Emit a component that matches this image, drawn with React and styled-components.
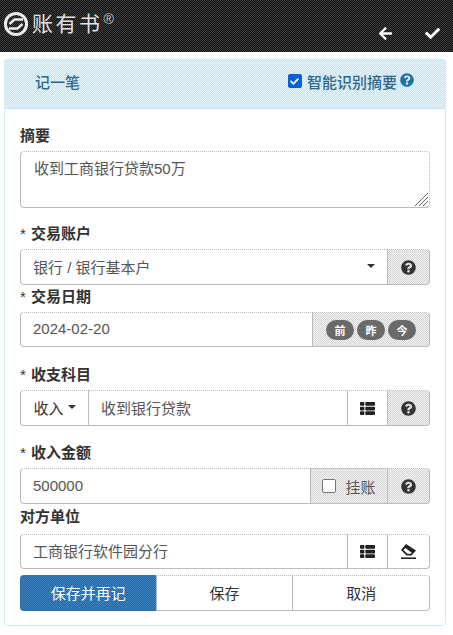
import React from 'react';
import styled, { createGlobalStyle, css } from 'styled-components';
import { FaArrowLeft, FaCheck, FaQuestionCircle, FaThList } from 'react-icons/fa';

const dither = (a, b) => css`
  background: repeating-conic-gradient(${a} 0 25%, ${b} 0 50%) 0 0 / 2px 2px;
`;

const Global = createGlobalStyle`
  html, body { margin: 0; padding: 0; background: #fff; }
  body { font-family: "Liberation Sans", "Noto Sans CJK SC", sans-serif; font-size: 15px; color: #333; }
  * { box-sizing: border-box; }
`;

const Page = styled.div`
  width: 453px;
  height: 635px;
  overflow: hidden;
  display: flex;
  flex-direction: column;
`;

const TopBar = styled.header`
  ${dither('#111111', '#3c3c3c')}
  height: 52px;
  flex: none;
  display: flex;
  justify-content: space-between;
  padding: 0 13px 0 3px;
`;

const Brand = styled.div`
  display: flex;
  align-items: flex-start;
  padding-top: 10px;
  gap: 3px;
`;

const BrandName = styled.span`
  font-family: "Noto Sans CJK SC", sans-serif;
  color: #e2e2e2;
  font-size: 21px;
  line-height: 28px;
  letter-spacing: 2.5px;
  font-weight: 400;
  margin-top: -2px;
`;

const BrandMark = styled.sup`
  font-size: 14px;
  line-height: 14px;
  color: #c8c8c8;
  margin: 2px 0 0 -2px;
  vertical-align: baseline;
`;

const TopActions = styled.div`
  display: flex;
  gap: 32px;
  padding-top: 26px;
  color: #fff;
  font-size: 15px;
`;

const Panel = styled.section`
  margin: 7px 7px 0 4px;
  height: 567px;
  border: 1px dotted #a8dbe6;
  border-radius: 4px;
  flex: none;
`;

const PanelHead = styled.div`
  ${dither('#e4f2fa', '#cee3f2')}
  height: 49px;
  display: flex;
  align-items: center;
  justify-content: space-between;
  padding: 0 31px 6px 30px;
  color: #2c6a8c;
  border-bottom: 1px solid #bce8f1;
`;

const HeadTitle = styled.span`
  font-size: 15px;
  font-weight: 500;
`;

const HeadOption = styled.label`
  display: flex;
  align-items: center;
  font-size: 15px;
  font-weight: 500;
  gap: 3px;
`;

const CheckBox = styled.span`
  width: 14px;
  height: 14px;
  border-radius: 2px;
  margin-right: 2px;
  background: ${(p) => (p.$on ? '#0b5fd8' : '#fff')};
  border: 1px solid ${(p) => (p.$on ? '#0b5fd8' : '#767676')};
  color: #fff;
  display: inline-flex;
  align-items: center;
  justify-content: center;
  font-size: 9px;
  flex: none;
`;

const Help = styled.span`
  display: inline-flex;
  margin-top: -3px;
  font-size: 14px;
  color: #1f6fa8;
`;

const PanelBody = styled.form`
  padding: 17px 15px 0 15px;
`;

const Label = styled.div`
  font-weight: 700;
  font-size: 15px;
  line-height: 20px;
  margin-top: ${(p) => p.$top || 0}px;
  margin-bottom: ${(p) => p.$bottom ?? 5}px;
  color: #333;
`;

const Star = styled.span`
  font-weight: 400;
  margin-right: 1px;
`;

const TextArea = styled.div`
  height: 57px;
  border: 1px solid #bbb;
  border-top-style: dotted;
  border-right-style: dotted;
  border-radius: 4px;
  padding: 7px 13px;
  line-height: 20px;
  color: #555;
  position: relative;
`;

const Grip = styled.svg`
  position: absolute;
  right: 0;
  bottom: 0;
`;

const Group = styled.div`
  display: flex;
  height: ${(p) => p.$h || 36}px;
  border-radius: 4px;
`;

const cell = css`
  height: 100%;
  border: 1px solid #bbb;
  border-top-style: dotted;
  margin-left: -1px;
  display: flex;
  align-items: center;
  &:first-child { margin-left: 0; border-radius: 4px 0 0 4px; }
  &:last-child { border-radius: 0 4px 4px 0; }
`;

const Field = styled.div`
  ${cell}
  flex: 1;
  min-width: 0;
  padding: 0 12px 2px;
  color: #555;
  background: #fff;
  justify-content: ${(p) => (p.$split ? 'space-between' : 'flex-start')};
`;

const Addon = styled.div`
  ${cell}
  ${dither('#f6f6f6', '#d2d2d2')}
  flex: none;
  width: ${(p) => p.$w}px;
  justify-content: center;
  gap: ${(p) => p.$gap || 3}px;
  color: #555;
`;

const SquareBtn = styled.div`
  ${cell}
  flex: none;
  width: ${(p) => p.$w}px;
  justify-content: center;
  gap: 4px;
  background: #fff;
  color: #333;
  padding-bottom: ${(p) => (p.$text ? 2 : 0)}px;
`;

const Caret = styled.span`
  display: inline-block;
  border-top: 4px solid #333;
  border-left: 4px solid transparent;
  border-right: 4px solid transparent;
  width: 0;
  height: 0;
`;

const Pill = styled.span`
  width: 28px;
  height: 20px;
  border-radius: 10px;
  background: #6a6a6a;
  color: #fff;
  font-size: 11px;
  font-weight: 700;
  display: inline-flex;
  align-items: center;
  justify-content: center;
`;

const Actions = styled.div`
  display: grid;
  grid-template-columns: repeat(3, 1fr);
  height: 36px;
  margin-top: 6px;
`;

const Action = styled.div`
  display: flex;
  align-items: center;
  justify-content: center;
  padding-bottom: 2px;
  border: 1px solid ${(p) => (p.$primary ? '#2e6da4' : '#bbb')};
  border-top-style: dotted;
  margin-left: -1px;
  color: #333;
  &:first-child { margin-left: 0; border-radius: 4px 0 0 4px; }
  &:last-child { border-radius: 0 4px 4px 0; }
  ${(p) => p.$primary && css`
    ${dither('#3f86c2', '#21649f')}
    color: #fff;
  `}
`;

const Logo = () => (
  <svg width="26" height="26" viewBox="0 0 26 26" fill="none" style={{ marginTop: 1 }}>
    <circle cx="13" cy="13" r="10.6" stroke="#eee" strokeWidth="3" />
    <path d="M6.5 13 L11.5 8.5 H20" stroke="#eee" strokeWidth="2.4" />
    <path d="M19.5 13 L14.5 17.5 H6" stroke="#eee" strokeWidth="2.4" />
  </svg>
);

const Eraser = () => (
  <svg width="17" height="17" viewBox="0 0 17 17" fill="#222">
    <path d="M6 1 L16 7.6 L11.5 12.5 H6.5 L1 7 Z" />
    <path d="M3.4 7 L7.4 10.8 H10.8 L11.8 9.7 L5.4 5 Z" fill="#fff" />
    <rect x="1" y="14.4" width="15" height="1.6" />
  </svg>
);

const QHelp = () => <FaQuestionCircle size={15} color="#333" />;
const ListIcon = () => <FaThList size={15} color="#222" />;

export default function App() {
  return (
    <Page>
      <Global />
      <TopBar>
        <Brand>
          <Logo />
          <BrandName>账有书</BrandName>
          <BrandMark>®</BrandMark>
        </Brand>
        <TopActions>
          <FaArrowLeft />
          <FaCheck />
        </TopActions>
      </TopBar>
      <Panel>
        <PanelHead>
          <HeadTitle>记一笔</HeadTitle>
          <HeadOption>
            <CheckBox $on><FaCheck /></CheckBox>
            智能识别摘要
            <Help><FaQuestionCircle /></Help>
          </HeadOption>
        </PanelHead>
        <PanelBody>
          <Label>摘要</Label>
          <TextArea>
            收到工商银行贷款50万
            <Grip width="16" height="16" viewBox="0 0 16 16" stroke="#666" strokeWidth="1">
              <path d="M2 15 L15 2 M6 15 L15 6 M10 15 L15 10" />
            </Grip>
          </TextArea>
          <Label $top={16} $bottom={5}><Star>*</Star> 交易账户</Label>
          <Group>
            <Field $split>银行 / 银行基本户<Caret /></Field>
            <Addon $w={43}><QHelp /></Addon>
          </Group>
          <Label $top={2} $bottom={5}><Star>*</Star> 交易日期</Label>
          <Group $h={35}>
            <Field>2024-02-20</Field>
            <Addon $w={118}>
              <Pill>前</Pill>
              <Pill>昨</Pill>
              <Pill>今</Pill>
            </Addon>
          </Group>
          <Label $top={18} $bottom={5}><Star>*</Star> 收支科目</Label>
          <Group>
            <SquareBtn $w={69} $text>收入<Caret /></SquareBtn>
            <Field>收到银行贷款</Field>
            <SquareBtn $w={41}><ListIcon /></SquareBtn>
            <Addon $w={43}><QHelp /></Addon>
          </Group>
          <Label $top={17} $bottom={5}><Star>*</Star> 收入金额</Label>
          <Group>
            <Field>500000</Field>
            <Addon $w={78} $gap={7}><CheckBox />挂账</Addon>
            <Addon $w={43}><QHelp /></Addon>
          </Group>
          <Label $top={3} $bottom={7}>对方单位</Label>
          <Group $h={35}>
            <Field>工商银行软件园分行</Field>
            <SquareBtn $w={41}><ListIcon /></SquareBtn>
            <SquareBtn $w={43}><Eraser /></SquareBtn>
          </Group>
          <Actions>
            <Action $primary>保存并再记</Action>
            <Action>保存</Action>
            <Action>取消</Action>
          </Actions>
        </PanelBody>
      </Panel>
    </Page>
  );
}
